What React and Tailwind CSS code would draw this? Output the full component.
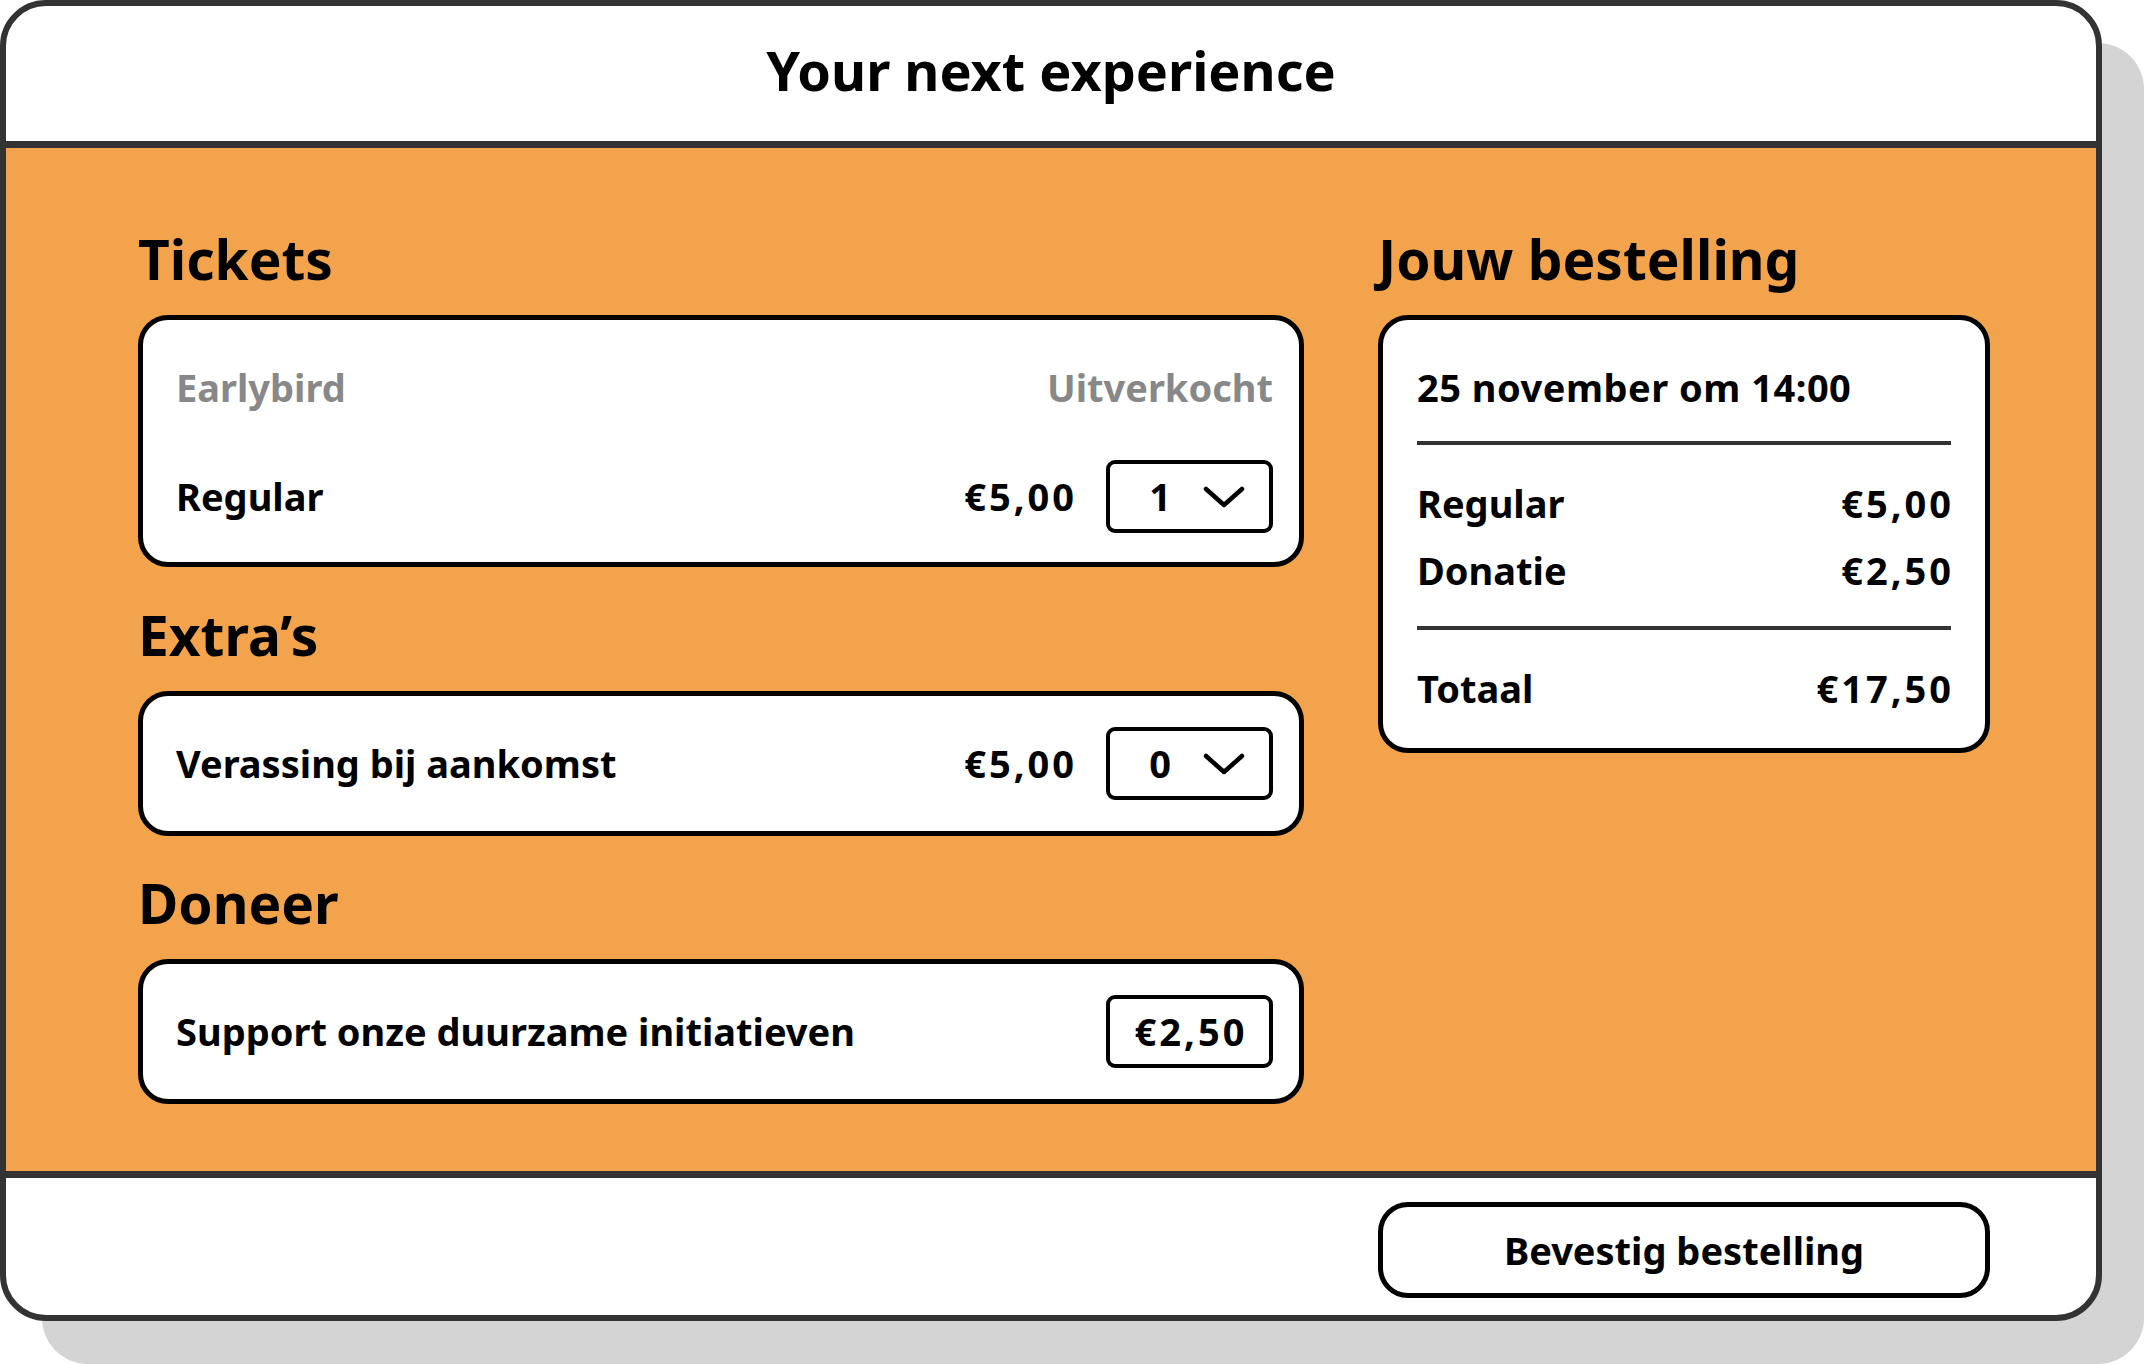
import React from 'react'

const Chevron = () => (
  <svg width="42" height="22" viewBox="0 0 42 22" fill="none" className="shrink-0">
    <polyline points="3,3 21,19 39,3" stroke="#000" strokeWidth="4.5" strokeLinecap="round" strokeLinejoin="round" />
  </svg>
)

function Select({ value }) {
  return (
    <div className="flex items-center w-[167px] h-[73px] border-[4px] border-black rounded-[9px] pl-[14px]">
      <span className="w-[72px] text-center">{value}</span>
      <span className="ml-[7px]">
        <Chevron />
      </span>
    </div>
  )
}

function Heading({ children }) {
  return <h2 className="text-[55px] leading-[55px] font-bold mb-[29px]">{children}</h2>
}

// prices are set a bit wider than the body text; -mr cancels the trailing spacing
const Price = ({ children, className = '' }) => (
  <span className={`tracking-[3px] ${className}`}>{children}</span>
)

export default function App() {
  return (
    <div
      className="w-[2144px] h-[1364px] bg-white text-black overflow-hidden"
      style={{ fontFamily: '"Noto Sans", "Open Sans", sans-serif' }}
    >
      <div className="w-[2102px] h-[1321px] border-[6px] border-[#333333] rounded-[46px] overflow-hidden flex flex-col bg-white shadow-[42px_43px_0_0_#d4d4d4]">
        {/* Header */}
        <header className="h-[142px] shrink-0 border-b-[7px] border-[#333333] flex items-center justify-center pb-[8px]">
          <h1 className="text-[54px] leading-none font-bold">Your next experience</h1>
        </header>

        {/* Main */}
        <main className="h-[1023px] shrink-0 bg-[#f2a34c] flex pt-[83px] pl-[132px] pr-[109px] gap-[74px] text-[38px] font-bold">
          <div className="w-[1166px] shrink-0 flex flex-col">
            <Heading>Tickets</Heading>
            <div className="h-[252px] bg-white border-[5px] border-black rounded-[30px] pl-[33px] pr-[26px] pt-[44px] flex flex-col">
              <div className="h-[46px] leading-[46px] flex justify-between text-[#888888]">
                <span>Earlybird</span>
                <span>Uitverkocht</span>
              </div>
              <div className="mt-[51px] h-[71px] flex items-center">
                <span className="flex-1">Regular</span>
                <Price className="mr-[29px]">€5,00</Price>
                <Select value="1" />
              </div>
            </div>

            <div className="mt-[40px]">
              <Heading>Extra’s</Heading>
            </div>
            <div className="h-[145px] bg-white border-[5px] border-black rounded-[30px] pl-[33px] pr-[26px] flex items-center">
              <span className="flex-1">Verassing bij aankomst</span>
              <Price className="mr-[29px]">€5,00</Price>
              <Select value="0" />
            </div>

            <div className="mt-[39px]">
              <Heading>Doneer</Heading>
            </div>
            <div className="h-[145px] bg-white border-[5px] border-black rounded-[30px] pl-[33px] pr-[26px] flex items-center">
              <span className="flex-1">Support onze duurzame initiatieven</span>
              <div className="w-[167px] h-[73px] border-[4px] border-black rounded-[9px] flex items-center justify-center pl-[3px]">
                <Price>€2,50</Price>
              </div>
            </div>
          </div>

          <div className="w-[612px] shrink-0 flex flex-col">
            <Heading>Jouw bestelling</Heading>
            <div className="h-[438px] bg-white border-[5px] border-black rounded-[30px] px-[34px] pt-[44px] leading-[46px]">
              <div className="tracking-[0.5px]">25 november om 14:00</div>
              <div className="mt-[31px] h-[4px] bg-[#333333]" />
              <div className="mt-[35px] flex justify-between">
                <span>Regular</span>
                <Price className="-mr-[3px]">€5,00</Price>
              </div>
              <div className="mt-[21px] flex justify-between">
                <span>Donatie</span>
                <Price className="-mr-[3px]">€2,50</Price>
              </div>
              <div className="mt-[33px] h-[4px] bg-[#333333]" />
              <div className="mt-[35px] flex justify-between">
                <span>Totaal</span>
                <Price className="-mr-[3px]">€17,50</Price>
              </div>
            </div>
          </div>
        </main>

        {/* Footer */}
        <footer className="h-[144px] shrink-0 border-t-[7px] border-[#333333] flex items-start justify-end pt-[24px] pr-[106px]">
          <button className="w-[612px] h-[96px] border-[5px] border-black rounded-[30px] bg-white text-[38px] font-bold">
            Bevestig bestelling
          </button>
        </footer>
      </div>
    </div>
  )
}
